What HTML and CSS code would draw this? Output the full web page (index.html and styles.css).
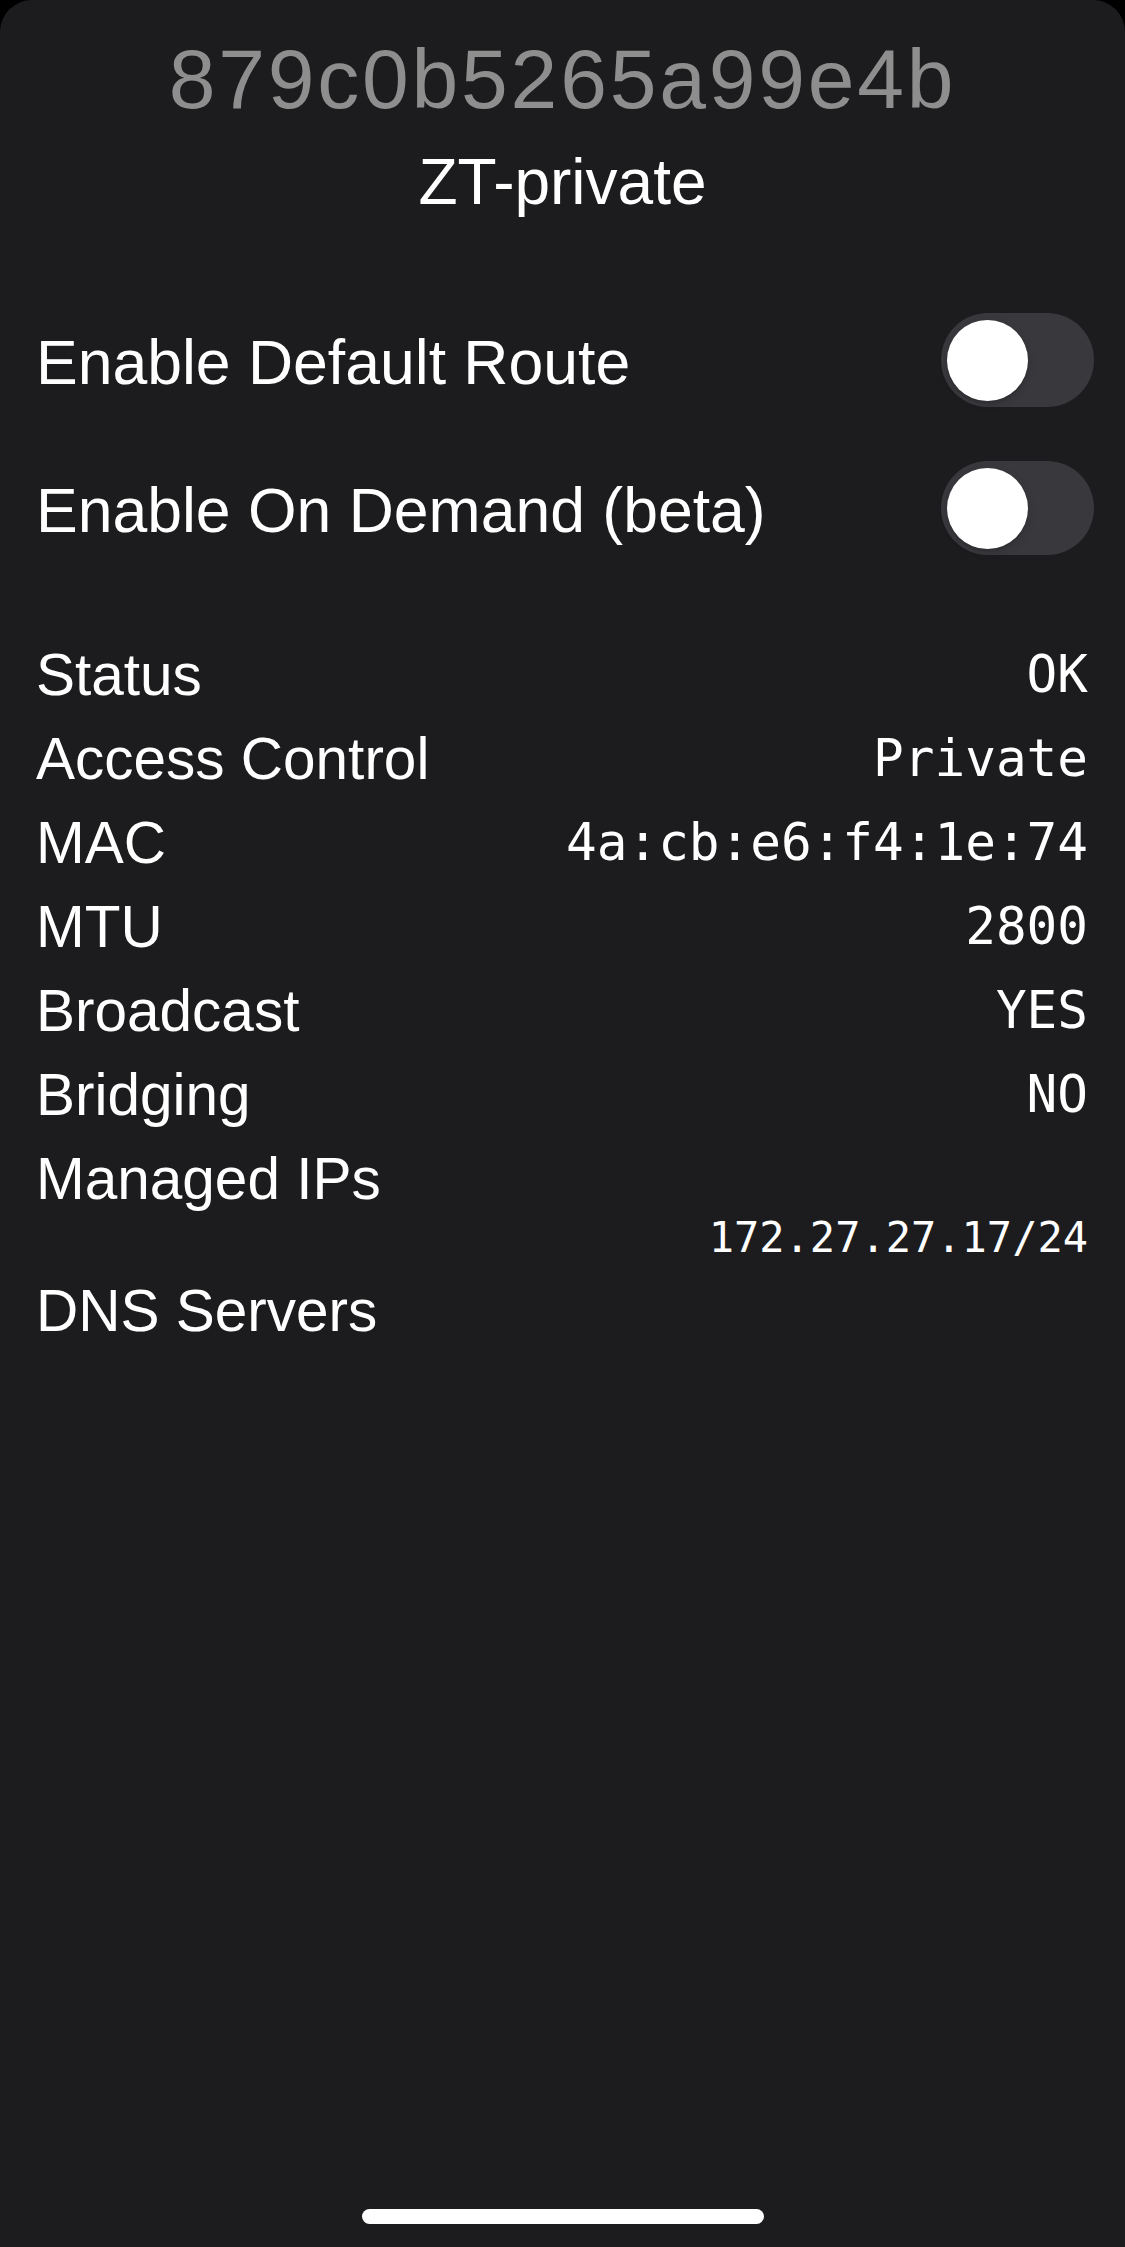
FILE: index.html
```html
<!DOCTYPE html>
<html lang="en">
<head>
<meta charset="utf-8">
<title>ZT-private</title>
<link rel="stylesheet" href="styles.css">
</head>
<body>
<div class="sheet">
  <header class="header">
    <div class="network-id">879c0b5265a99e4b</div>
    <div class="network-name">ZT-private</div>
  </header>

  <section class="toggles">
    <div class="toggle-row">
      <span class="toggle-label">Enable Default Route</span>
      <span class="switch"><span class="knob"></span></span>
    </div>
    <div class="toggle-row">
      <span class="toggle-label">Enable On Demand (beta)</span>
      <span class="switch"><span class="knob"></span></span>
    </div>
  </section>

  <section class="info">
    <div class="info-row"><span class="label">Status</span><span class="value">OK</span></div>
    <div class="info-row"><span class="label">Access Control</span><span class="value">Private</span></div>
    <div class="info-row"><span class="label">MAC</span><span class="value">4a:cb:e6:f4:1e:74</span></div>
    <div class="info-row"><span class="label">MTU</span><span class="value">2800</span></div>
    <div class="info-row"><span class="label">Broadcast</span><span class="value">YES</span></div>
    <div class="info-row"><span class="label">Bridging</span><span class="value">NO</span></div>
    <div class="info-row"><span class="label">Managed IPs</span></div>
    <div class="ip-list">
      <div class="ip">172.27.27.17/24</div>
    </div>
    <div class="info-row dns"><span class="label">DNS Servers</span></div>
  </section>

  <div class="home-indicator"></div>
</div>
</body>
</html>
```
FILE: styles.css
```css
html, body {
  margin: 0;
  padding: 0;
  background: #000000;
}

body {
  width: 1125px;
  font-family: "Liberation Sans", Arial, sans-serif;
  color: #ffffff;
}

.sheet {
  min-height: 2247px;
  background: #1c1c1e;
  border-radius: 32px 32px 0 0;
  display: flex;
  flex-direction: column;
  box-sizing: border-box;
  padding-top: 29px;
}

.header {
  display: flex;
  flex-direction: column;
  align-items: center;
  gap: 15px;
}

.network-id {
  font-size: 84px;
  line-height: 100px;
  letter-spacing: 2.8px;
  color: #8e8e8e;
}

.network-name {
  font-size: 64px;
  line-height: 76px;
  color: #ffffff;
}

.toggles {
  margin-top: 93px;
  display: flex;
  flex-direction: column;
  gap: 54px;
}

.toggle-row {
  display: flex;
  align-items: center;
  justify-content: space-between;
  height: 94px;
  padding: 0 31px 0 36px;
}

.toggle-label {
  font-size: 62.5px;
  line-height: 94px;
  padding-top: 3px;
}

.switch {
  width: 153px;
  height: 94px;
  border-radius: 47px;
  background: #39393d;
  display: flex;
  align-items: center;
  padding-left: 6px;
  box-sizing: border-box;
}

.knob {
  width: 81px;
  height: 81px;
  border-radius: 50%;
  background: #ffffff;
  box-shadow: 0 3px 8px rgba(0, 0, 0, 0.15), 0 3px 1px rgba(0, 0, 0, 0.06);
}

.info {
  margin-top: 78px;
  display: flex;
  flex-direction: column;
}

.info-row {
  display: flex;
  justify-content: space-between;
  padding: 0 37px 0 36px;
  height: 84px;
}

.label {
  font-size: 58.5px;
  line-height: 84px;
}

.value {
  font-family: "DejaVu Sans Mono", "Liberation Mono", monospace;
  font-size: 51px;
  line-height: 84px;
}

.ip-list {
  display: flex;
  flex-direction: column;
  align-items: flex-end;
  padding: 0 37px 0 36px;
}

.ip {
  font-family: "DejaVu Sans Mono", "Liberation Mono", monospace;
  font-size: 42px;
  line-height: 34px;
}

.dns {
  margin-top: 14px;
}

.home-indicator {
  margin: auto auto 23px;
  width: 402px;
  height: 15px;
  border-radius: 8px;
  background: #ffffff;
}
```
